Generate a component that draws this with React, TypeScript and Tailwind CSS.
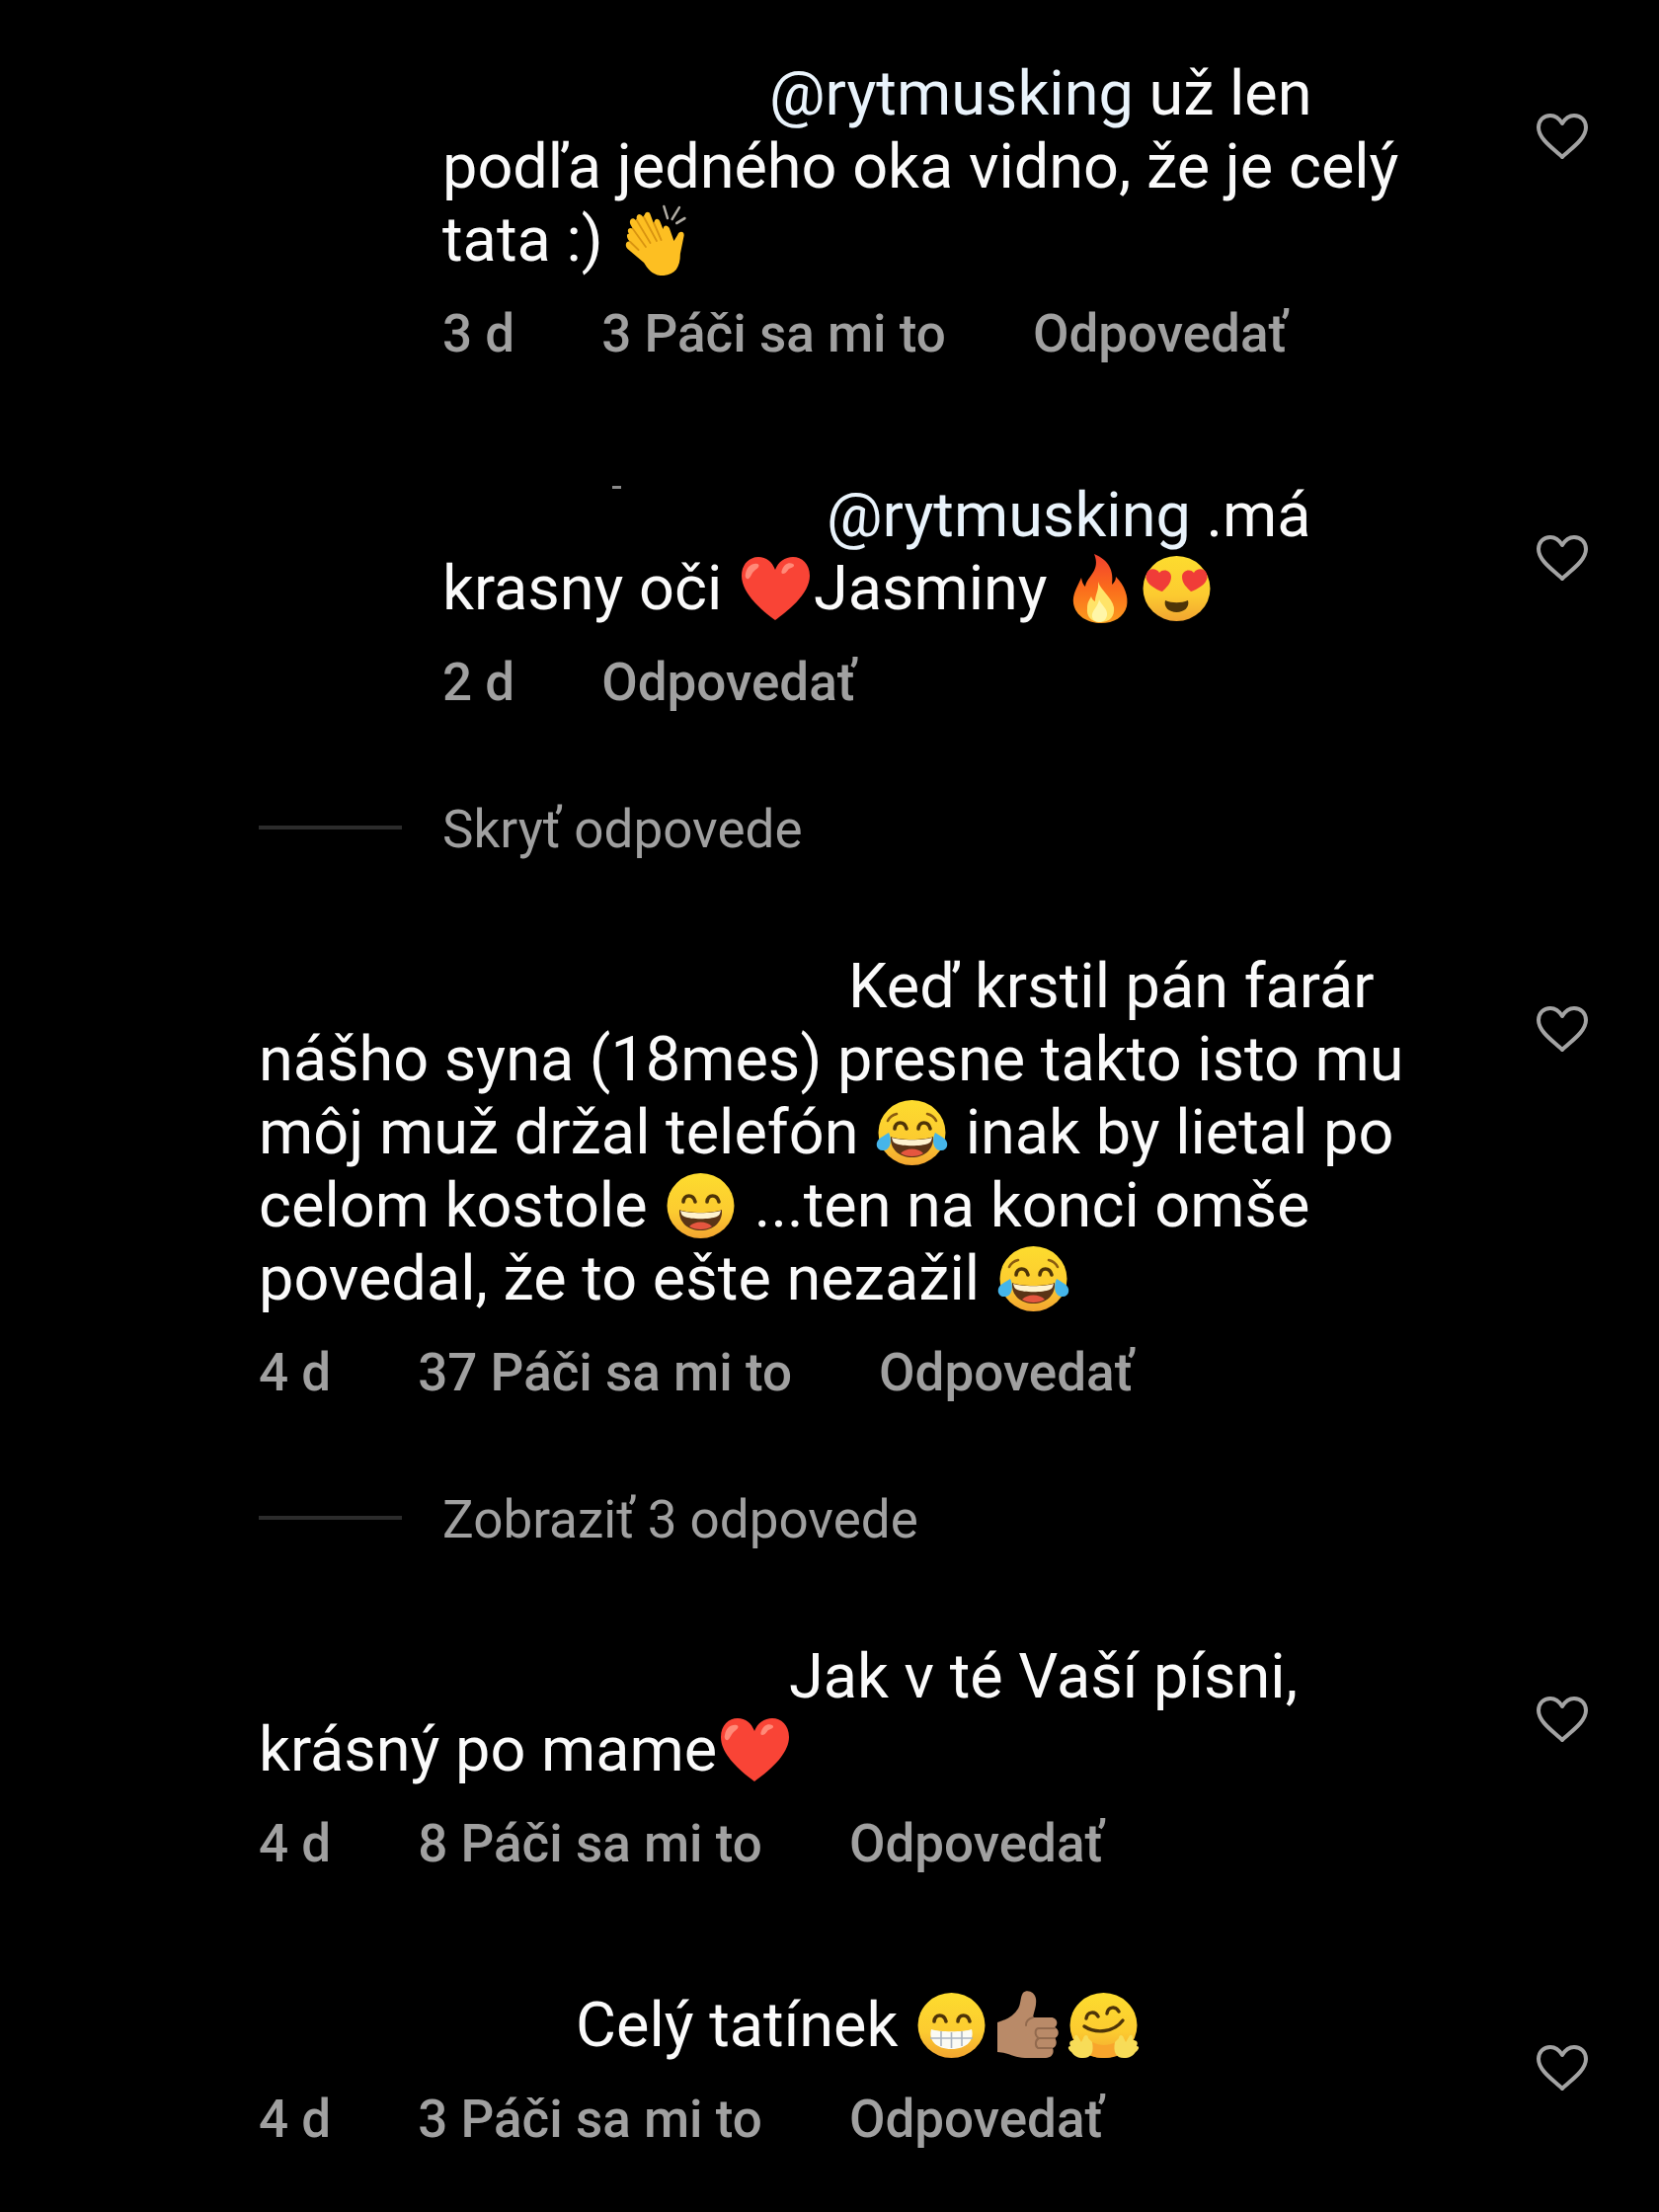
import React, { useState } from 'react';

type EmojiName = 'clap' | 'heart' | 'fire' | 'heartEyes' | 'joy' | 'smile' | 'grin' | 'thumb' | 'hug';

interface CommentProps {
  reply?: boolean;
  nameWidth: string;
  nameMark?: boolean;
  age: string;
  likes?: string;
  children: React.ReactNode;
}

const Face = () => <ellipse cx="38.5" cy="36" rx="34" ry="33" fill="url(#faceFill)" />;

const SmileEyes = () => (
  <path
    d="M21 32c1-8 10-8 12 0M45 32c1-8 10-8 12 0"
    fill="none"
    stroke="#4e3408"
    strokeWidth="3.6"
    strokeLinecap="round"
  />
);

const OpenMouth = () => (
  <>
    <path d="M17 40c8 4 35 4 43 0 1 13-9 21-21.5 21S16 53 17 40z" fill="#5b3416" />
    <path d="M18 41c8 3 33 3 41 0-1 4-2 5-4 6-7 3-26 3-33 0-2-1-3-2-4-6z" fill="#fff3d0" />
    <path d="M27 57c5-6 18-6 23 0-6 4-17 4-23 0z" fill="#e5563f" />
  </>
);

const drawings: Record<EmojiName, { label: string; art: React.ReactNode }> = {
  clap: {
    label: 'tlieskanie',
    art: (
      <g transform="translate(4 0) scale(0.92 1)">
        <path
          d="M8 30c-4-4 0-8 4-5l-3-5c-2-5 3-8 6-4l1-1c-1-5 4-7 7-2l2-3c1-3 5-3 6 0l4 10c0-6 5-7 7-2l3 7c1-5 5-4 7-1l5 13 4-6c2-5 8-4 7 1l-4 18c0 14-6 21-18 22-12 1-18-7-22-13L6 45c-4-4-1-9 3-7l-1-1c-4-4-3-8 0-7z"
          fill="#fdbf22"
        />
        <path
          d="M12 25l14 18M16 16l15 23M24 13l14 24M35 19l8 17M9 38l9 8"
          fill="none"
          stroke="#d99410"
          strokeWidth="2"
          strokeLinecap="round"
        />
        <path d="M46 2l4 12M63 3l-8 12M69 14l-9 5" stroke="#b0aca4" strokeWidth="2.6" strokeLinecap="round" />
      </g>
    ),
  },
  heart: {
    label: 'srdce',
    art: (
      <>
        <path
          d="M38 68C27 60 4 42 4 23 4 11 12 4 21 4c8 0 14 5 17 13C41 9 48 4 56 4c9 0 17 7 17 19 0 19-24 37-35 45z"
          fill="#f94436"
        />
        <path d="M8 21c1-7 6-11 12-10 3 1 1 4-2 6-4 3-4 7-7 9-2 1-4-2-3-5z" fill="#ff8a78" />
        <path d="M45 17c2-5 6-8 11-6 3 2-1 4-4 5-2 2-3 5-6 5-2 0-2-2-1-4z" fill="#ff8a78" />
      </>
    ),
  },
  fire: {
    label: 'oheň',
    art: (
      <>
        <path
          d="M32 1c15 6 20 17 18 31 2-2 4-4 4-8 9 9 13 20 11 30-3 11-13 17-26 17S13 64 11 51c-1-9 3-15 8-26 1 5 2 7 4 9 2-11 16-16 9-33z"
          fill="url(#fireFill)"
        />
        <path
          d="M36 29c2 8 14 16 16 26 1 9-4 15-14 15-9 0-14-6-13-14 0-6 2-8 4-12 1 3 2 4 4 5 0-7 4-11 3-20z"
          fill="#ffe368"
        />
        <path d="M37 47c2 6 9 9 8 16-1 5-4 7-8 7s-8-3-7-8c1-5 6-8 7-15z" fill="#fff6a8" />
      </>
    ),
  },
  heartEyes: {
    label: 'zaľúbené oči',
    art: (
      <>
        <Face />
        <path d="M24 39C15 36 5 29 8 21c2-6 10-6 13-1 4-5 12-2 12 4 0 7-5 11-9 15z" fill="#f03c38" />
        <path d="M53 39c9-3 19-10 16-18-2-6-10-6-13-1-4-5-12-2-12 4 0 7 5 11 9 15z" fill="#f03c38" />
        <path d="M27 48c7 3 16 3 23 0 2 7-4 12-11.5 12S25 55 27 48z" fill="#4e3408" />
      </>
    ),
  },
  joy: {
    label: 'slzy radosti',
    art: (
      <>
        <Face />
        <path d="M14 24c2-4 5-6 9-7M54 17c4 1 7 3 9 7" fill="none" stroke="#8a5c10" strokeWidth="2.6" strokeLinecap="round" />
        <SmileEyes />
        <OpenMouth />
        <path d="M15 36c3 6 3 17-5 18-8 1-10-9-3-13 3-2 5-3 8-5z" fill="#45b5ea" />
        <path d="M62 36c-3 6-3 17 5 18 8 1 10-9 3-13-3-2-5-3-8-5z" fill="#45b5ea" />
      </>
    ),
  },
  smile: {
    label: 'smiech',
    art: (
      <>
        <Face />
        <SmileEyes />
        <OpenMouth />
      </>
    ),
  },
  grin: {
    label: 'úškrn',
    art: (
      <>
        <Face />
        <SmileEyes />
        <path d="M18 40c8 3 33 3 41 0 3 11-5 20-20.5 20S15 51 18 40z" fill="#fbfbf4" />
        <path d="M17 49h43M28 42v15M38.5 43v16M49 42v15" fill="none" stroke="#a9b4c0" strokeWidth="1.6" />
      </>
    ),
  },
  thumb: {
    label: 'palec hore',
    art: (
      <>
        <path
          d="M8 33c10-3 17-7 21-14 3-5 2-12 5-16 4-4 12-1 13 6 1 7-2 13-3 19h18c7 0 8 7 4 10 5 2 5 9 0 11 3 3 2 9-2 10 2 5-1 10-7 10H36c-11 0-15-5-28-6z"
          fill="#b98a68"
        />
        <path
          d="M44 28c-4 1-7 4-7 8M50 39h16M50 49h16M49 59h14M50 39c-4 0-5 7 0 10-4 2-4 8-1 10"
          fill="none"
          stroke="#926a4e"
          strokeWidth="2"
          strokeLinecap="round"
        />
      </>
    ),
  },
  hug: {
    label: 'objatie',
    art: (
      <>
        <Face />
        <path d="M27 53c8 4 16 4 24 0l4 13c-10 4-22 4-32 0z" fill="#f8a52c" />
        <path
          d="M21 29c1-7 9-8 12-2M42 24c1-7 9-8 12-2"
          fill="none"
          stroke="#4e3408"
          strokeWidth="3.4"
          strokeLinecap="round"
        />
        <path d="M19 37c12 8 30 6 39-6" fill="none" stroke="#4e3408" strokeWidth="3.4" strokeLinecap="round" />
        <path
          d="M9 51c-1-5 2-7 4-3l3 5 2-4c1-4 5-4 5 0l4 4c2 10-1 16-9 16-6 0-9-2-12-6-4-3-4-6-1-6-2-4 0-6 4-6z"
          fill="#f7dc58"
        />
        <path
          d="M68 51c1-5-2-7-4-3l-3 5-2-4c-1-4-5-4-5 0l-4 4c-2 10 1 16 9 16 6 0 9-2 12-6 4-3 4-6 1-6 2-4 0-6-4-6z"
          fill="#f7dc58"
        />
      </>
    ),
  },
};

const Emoji = ({ name }: { name: EmojiName }) => (
  <svg
    viewBox="0 0 77 72"
    role="img"
    aria-label={drawings[name].label}
    className="inline-block h-[72px] w-[77px] align-[-15px]"
  >
    {drawings[name].art}
  </svg>
);

// Shared gradients, referenced by id from every emoji
const Gradients = () => (
  <svg className="absolute h-0 w-0" aria-hidden="true">
    <defs>
      <linearGradient id="faceFill" x1="0" y1="0" x2="0" y2="1">
        <stop offset="0" stopColor="#fddc2e" />
        <stop offset="0.6" stopColor="#fccb30" />
        <stop offset="1" stopColor="#f2a530" />
      </linearGradient>
      <linearGradient id="fireFill" x1="0" y1="0" x2="0" y2="1">
        <stop offset="0" stopColor="#f2402e" />
        <stop offset="0.5" stopColor="#fb6c1c" />
        <stop offset="1" stopColor="#fb9b1e" />
      </linearGradient>
    </defs>
  </svg>
);

const LikeButton = () => {
  const [liked, setLiked] = useState(false);

  return (
    <button
      type="button"
      aria-label="Páči sa mi to"
      aria-pressed={liked}
      onClick={() => setLiked(!liked)}
      className="mt-[55px] h-[50px] w-[54px] shrink-0"
    >
      <svg viewBox="0 0 54 50" className="h-full w-full" fill={liked ? '#ff3040' : 'none'} stroke="#a3a3a3" strokeWidth="4">
        <path
          d="M27 46C19 38 3 28 3 16 3 9 8 4 15 4c6 0 9 3 12 8 3-5 6-8 12-8 7 0 12 5 12 12 0 12-16 22-24 30z"
          strokeLinejoin="round"
        />
      </svg>
    </button>
  );
};

const Mention = () => (
  <a href="#rytmusking" className="text-[#e9f3fb]">
    @rytmusking
  </a>
);

const Comment = ({ reply, nameWidth, nameMark, age, likes, children }: CommentProps) => (
  <article className={`flex items-start justify-between pr-[71px] ${reply ? 'pl-[448px]' : 'pl-[262px]'}`}>
    <div className={reply ? 'w-[990px]' : 'w-[1176px]'}>
      <p className="text-[63px] leading-[74px] text-[#fafafa]">
        {/* blanked-out user name */}
        <span className={`relative inline-block ${nameWidth}`}>
          {nameMark && <span className="absolute bottom-12 left-[172px] h-[3px] w-[9px] bg-[#8a8a8a]" />}
        </span>
        {children}
      </p>
      <div className="mt-[27px] flex gap-[88px] text-[53px] leading-[62px] font-medium text-[#a0a0a0]">
        <span>{age}</span>
        {likes && <span>{likes} Páči sa mi to</span>}
        <button type="button">Odpovedať</button>
      </div>
    </div>
    <LikeButton />
  </article>
);

const RepliesToggle = ({ children }: { children: React.ReactNode }) => (
  <button type="button" className="mt-[87px] mb-[91px] ml-[262px] flex items-center gap-[41px] text-[53px] leading-[62px] text-[#a0a0a0]">
    <span className="mb-1 h-1 w-[145px] bg-[#2c2c2c]" />
    {children}
  </button>
);

const App: React.FC = () => {
  return (
    <main className="min-h-screen bg-black pt-[58px] pb-14 font-['Roboto',sans-serif]">
      <Gradients />
      <Comment reply nameWidth="w-[331px]" age="3 d" likes="3">
        <Mention /> už len podľa jedného oka vidno, že je celý tata :) <Emoji name="clap" />
      </Comment>

      <div className="h-[116px]" />

      <Comment reply nameWidth="w-[389px]" nameMark age="2 d">
        <Mention /> .má krasny oči <Emoji name="heart" />Jasminy <Emoji name="fire" />
        <Emoji name="heartEyes" />
      </Comment>

      <RepliesToggle>Skryť odpovede</RepliesToggle>

      <Comment nameWidth="w-[597px]" age="4 d" likes="37">
        Keď krstil pán farár nášho syna (18mes) presne takto isto mu môj muž držal telefón{' '}
        <Emoji name="joy" /> inak by lietal po celom kostole <Emoji name="smile" /> ...ten na konci omše
        povedal, že to ešte nezažil <Emoji name="joy" />
      </Comment>

      <RepliesToggle>Zobraziť 3 odpovede</RepliesToggle>

      <Comment nameWidth="w-[537px]" age="4 d" likes="8">
        Jak v té Vaší písni, krásný po mame
        <Emoji name="heart" />
      </Comment>

      <div className="h-[116px]" />

      <Comment nameWidth="w-[321px]" age="4 d" likes="3">
        Celý tatínek <Emoji name="grin" />
        <Emoji name="thumb" />
        <Emoji name="hug" />
      </Comment>
    </main>
  );
};

export default App;
